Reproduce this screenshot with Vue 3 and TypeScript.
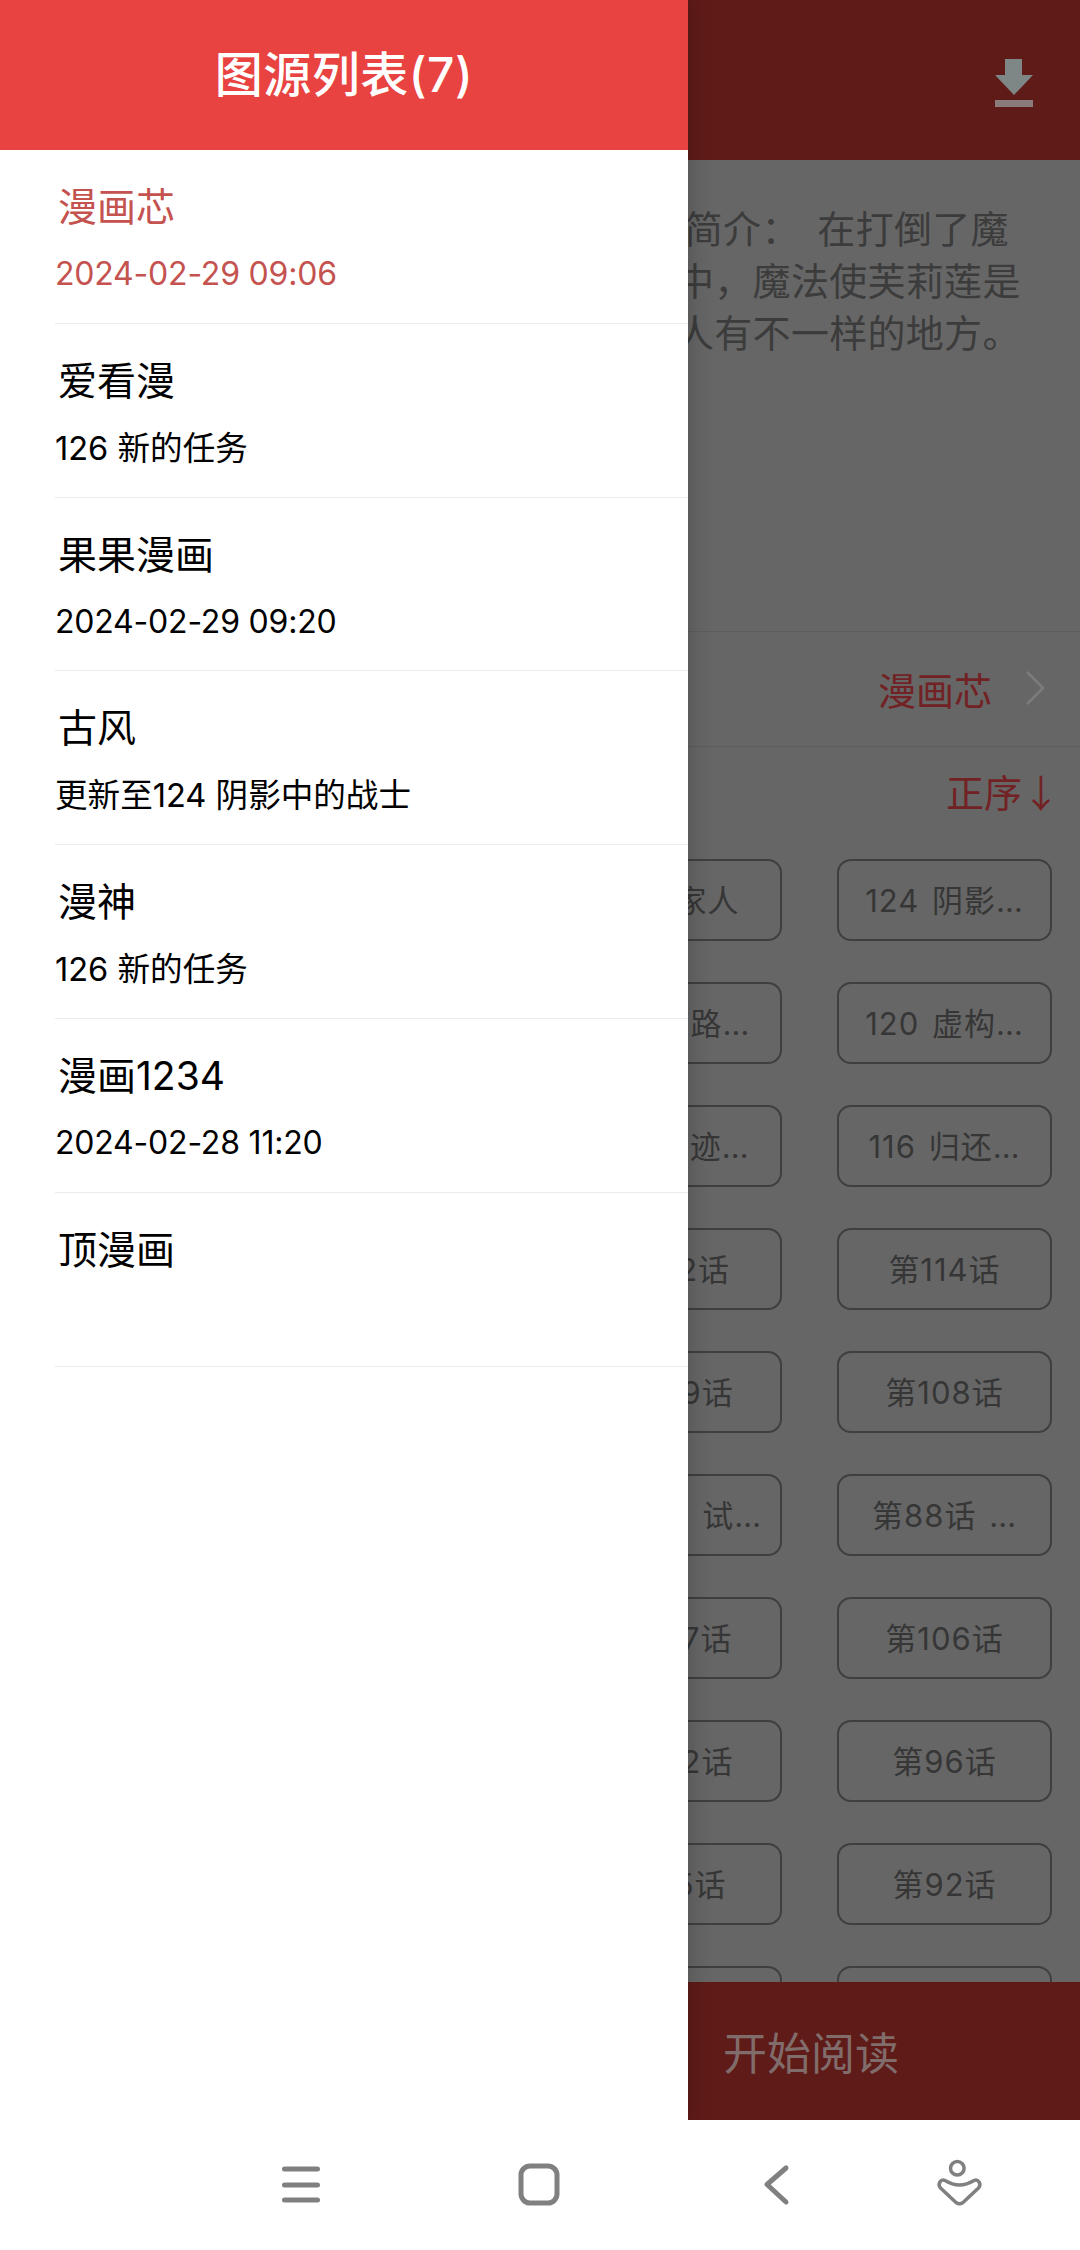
<template>
  <div class="screen">
    <div class="page">
      <header class="topbar">
        <svg class="download" viewBox="0 0 38 48" width="38" height="48">
          <path d="M10 0h17v16h11L19 36 0 16h10z" fill="#7f8686" />
          <rect x="0" y="41" width="38" height="7" fill="#8a7c7a" />
        </svg>
      </header>

      <section class="summary">
        <div class="summary-line">&nbsp;简介：&nbsp;&nbsp;在打倒了魔</div>
        <div class="summary-line">中，魔法使芙莉莲是</div>
        <div class="summary-line">人有不一样的地方。</div>
      </section>

      <div class="source-row">
        <span class="red-text">漫画芯</span>
        <svg class="chevron" viewBox="0 0 20 36" width="20" height="36">
          <path d="M2 2l16 16L2 34" fill="none" stroke="#7c7c7c" stroke-width="2.5" />
        </svg>
      </div>

      <div class="sort-row">
        <span class="red-text">正序↓</span>
      </div>

      <div class="chapters">
        <div v-for="(c, i) in chapters" :key="i" class="chapter">{{ c }}</div>
      </div>

      <div class="read-bar">开始阅读</div>

      <aside class="drawer">
        <div class="drawer-title">图源列表(7)</div>
        <ul class="source-list">
          <li
            v-for="(s, i) in sources"
            :key="s.name"
            class="source"
            :class="{ active: i === 0 }"
          >
            <div class="source-name">{{ s.name }}</div>
            <div class="source-latest" :class="{ date: s.isDate }">{{ s.latest }}</div>
          </li>
        </ul>
      </aside>
    </div>

    <nav class="navbar">
      <svg class="nav-icon nav-menu" viewBox="0 0 60 60" width="60" height="60">
        <path d="M13.500 14h33M13.500 30h33M13.500 45h33" stroke="#808080" stroke-width="5" stroke-linecap="round" />
      </svg>
      <svg class="nav-icon nav-home" viewBox="0 0 60 60" width="60" height="60">
        <rect x="12" y="11" width="36" height="37" rx="9" fill="none" stroke="#808080" stroke-width="5" />
      </svg>
      <svg class="nav-icon nav-back" viewBox="0 0 60 60" width="60" height="60">
        <path d="M39 13L20 29.500 39 47" fill="none" stroke="#808080" stroke-width="5" stroke-linecap="round" stroke-linejoin="round" />
      </svg>
      <svg class="nav-icon nav-user" viewBox="0 0 60 60" width="60" height="60">
        <circle cx="29.300" cy="13.300" r="6.800" fill="none" stroke="#808080" stroke-width="3.500" />
        <path d="M17 25.500C22 28.500 27 30 31.500 30 36 30 41 28.500 46 25.500 50 23.500 54 29 50.500 33L35 47.500Q31.500 50 28 47.500L12.500 33C9 29 13 23.500 17 25.500Z" fill="none" stroke="#808080" stroke-width="3.500" stroke-linejoin="round" />
      </svg>
    </nav>
  </div>
</template>

<script setup lang="ts">
interface Source {
  name: string
  latest: string
  isDate?: boolean
}

const sources: Source[] = [
  { name: '漫画芯', latest: '2024-02-29 09:06', isDate: true },
  { name: '爱看漫', latest: '126 新的任务' },
  { name: '果果漫画', latest: '2024-02-29 09:20', isDate: true },
  { name: '古风', latest: '更新至124 阴影中的战士' },
  { name: '漫神', latest: '126 新的任务' },
  { name: '漫画1234', latest: '2024-02-28 11:20', isDate: true },
  { name: '顶漫画', latest: '' }
]

// the last row is cut by the read bar, only its top border shows
const chapters = [
  '125 家人', '124 阴影…',
  '121 道路…', '120 虚构…',
  '117 奇迹…', '116 归还…',
  '第112话', '第114话',
  '第109话', '第108话',
  '第87话 试…', '第88话 …',
  '第107话', '第106话',
  '第102话', '第96话',
  '第95话', '第92话',
  '', ''
]
</script>

<style>
html, body {
  margin: 0;
  padding: 0;
  background: #fff;
}
</style>

<style scoped>
* {
  box-sizing: border-box;
}

.screen {
  width: 1080px;
  height: 2250px;
  overflow: hidden;
  background: #fff;
  font-family: Inter, "Noto Sans CJK SC", sans-serif;
}

/* dimmed page behind the drawer */
.page {
  position: relative;
  display: flex;
  flex-direction: column;
  height: 2120px;
  background: #666;
  overflow: hidden;
}

.topbar {
  flex: none;
  height: 160px;
  background: #5f1b18;
  display: flex;
  justify-content: flex-end;
  padding: 59px 47px 0 0;
}

.download {
  display: block;
}

.summary {
  flex: none;
  height: 471px;
  padding: 41px 0 0 676px;
  font-size: 38px;
  letter-spacing: 0.3px;
  line-height: 52px;
  color: #3c3c3c;
  white-space: nowrap;
  font-family: "Noto Sans CJK SC", sans-serif;
}

.source-row {
  flex: none;
  height: 116px;
  border-top: 1px solid #5e5e5e;
  border-bottom: 1px solid #5e5e5e;
  display: flex;
  align-items: center;
  justify-content: flex-end;
  gap: 33px;
  padding: 0 35px 2px 0;
}

.sort-row {
  flex: none;
  height: 112px;
  display: flex;
  align-items: center;
  justify-content: flex-end;
  padding: 0 20px 26px 0;
}

.red-text {
  font-size: 38px;
  color: #722224;
  font-family: "Noto Sans CJK SC", sans-serif;
}

.chapters {
  flex: 1;
  min-height: 0;
  overflow: hidden;
  display: grid;
  grid-template-columns: 215px 215px;
  grid-auto-rows: 82px;
  column-gap: 55px;
  row-gap: 41px;
  justify-content: end;
  padding-right: 28px;
}

.chapter {
  border: 2px solid #3f3f3f;
  border-radius: 14px;
  display: flex;
  align-items: center;
  justify-content: center;
  padding-bottom: 3px;
  font-size: 31px;
  letter-spacing: 1px;
  word-spacing: 3px;
  color: #363636;
  white-space: nowrap;
}

.read-bar {
  flex: none;
  height: 138px;
  background: #5f1b18;
  padding-left: 723px;
  font-size: 44px;
  line-height: 138px;
  color: #806c6b;
  font-family: "Noto Sans CJK SC", sans-serif;
}

.navbar {
  height: 130px;
  background: #fff;
  display: flex;
  align-items: flex-start;
  padding: 35px 0 0 271px;
}

.nav-icon {
  flex: none;
  display: block;
}

.nav-home,
.nav-back {
  margin-left: 178px;
}

.nav-user {
  margin-left: 121px;
}

/* drawer over the page */
.drawer {
  position: absolute;
  left: 0;
  top: 0;
  width: 688px;
  height: 2120px;
  background: #fff;
  box-shadow: 0 0 24px rgba(0, 0, 0, 0.22);
}

.drawer-title {
  height: 150px;
  background: #e84340;
  color: #fff;
  font-size: 48px;
  font-weight: 500;
  letter-spacing: 0.5px;
  line-height: 150px;
  text-align: center;
}

.source-list {
  list-style: none;
  margin: 0;
  padding: 0;
}

.source {
  height: 173.8px;
  margin-left: 55px;
  border-bottom: 1px solid #ebebeb;
  padding-top: 28px;
  color: #000;
}

.source.active {
  color: #c4524f;
}

.source-name {
  padding-left: 3px;
  font-size: 39px;
  line-height: 58px;
}

.source-latest {
  margin-top: 9px;
  font-size: 32.6px;
  line-height: 58px;
  min-height: 58px;
}

.source-latest.date {
  font-size: 32px;
  letter-spacing: -0.2px;
}
</style>
